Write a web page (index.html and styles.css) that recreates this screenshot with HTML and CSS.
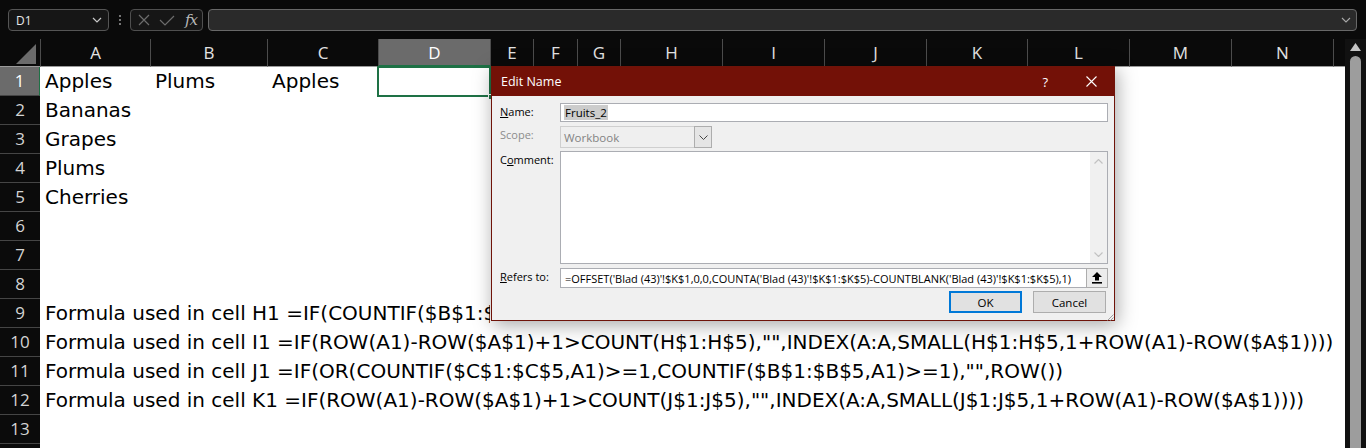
FILE: index.html
```html
<!DOCTYPE html>
<html lang="en">
<head>
  <meta charset="UTF-8" />
  <title>Edit Name</title>
  <link rel="stylesheet" href="styles.css">
</head>
<body>
  <div class="app">
    <div class="fbar">
      <div class="namebox">
        <span>D1</span>
        <svg class="nb-chev" width="10" height="6" viewBox="0 0 10 6"><path d="M1 1 L5 5 L9 1" fill="none" stroke="#c8c8c8" stroke-width="1.2"/></svg>
      </div>
      <div class="fdots">
        <svg width="4" height="12" viewBox="0 0 4 12"><circle cx="2" cy="2" r="1" fill="#9a9a9a"/><circle cx="2" cy="6" r="1" fill="#9a9a9a"/><circle cx="2" cy="10" r="1" fill="#9a9a9a"/></svg>
      </div>
      <div class="fbtns">
        <svg width="12" height="12" viewBox="0 0 12 12"><path d="M1 1 L11 11 M11 1 L1 11" stroke="#6c6c6c" stroke-width="1.2"/></svg>
        <svg width="16" height="11" viewBox="0 0 16 11"><path d="M1 5 L6 10 L15 1" fill="none" stroke="#6c6c6c" stroke-width="1.2"/></svg>
        <span class="fx">fx</span>
      </div>
      <div class="finput">
        <svg width="10" height="6" viewBox="0 0 10 6"><path d="M1 1 L5 5 L9 1" fill="none" stroke="#a8a8a8" stroke-width="1.1"/></svg>
      </div>
    </div>

    <div class="main">
      <div class="sheet">
        <div class="row head">
          <div class="corner"><svg width="20" height="20" viewBox="0 0 20 20"><path d="M20 0 L20 20 L0 20 Z" fill="#6b6b6b"/></svg></div>
          <div class="ch">A</div>
          <div class="ch">B</div>
          <div class="ch">C</div>
          <div class="ch sel">D</div>
          <div class="ch">E</div>
          <div class="ch">F</div>
          <div class="ch">G</div>
          <div class="ch">H</div>
          <div class="ch">I</div>
          <div class="ch">J</div>
          <div class="ch">K</div>
          <div class="ch">L</div>
          <div class="ch">M</div>
          <div class="ch">N</div>
          <div class="ch"></div>
        </div>
        <div class="row">
          <div class="rh sel">1</div>
          <div class="c">Apples</div>
          <div class="c">Plums</div>
          <div class="c">Apples</div>
          <div class="c cur"><span class="handle"></span></div>
        </div>
        <div class="row"><div class="rh">2</div><div class="c">Bananas</div></div>
        <div class="row"><div class="rh">3</div><div class="c">Grapes</div></div>
        <div class="row"><div class="rh">4</div><div class="c">Plums</div></div>
        <div class="row"><div class="rh">5</div><div class="c">Cherries</div></div>
        <div class="row"><div class="rh">6</div></div>
        <div class="row"><div class="rh">7</div></div>
        <div class="row"><div class="rh">8</div></div>
        <div class="row"><div class="rh">9</div><div class="c under">Formula used in cell H1 =IF(COUNTIF($B$1:$B$5,A1)&gt;=1,ROW(),"")</div></div>
        <div class="row"><div class="rh">10</div><div class="c">Formula used in cell I1 =IF(ROW(A1)-ROW($A$1)+1&gt;COUNT(H$1:H$5),"",INDEX(A:A,SMALL(H$1:H$5,1+ROW(A1)-ROW($A$1))))</div></div>
        <div class="row"><div class="rh">11</div><div class="c">Formula used in cell J1 =IF(OR(COUNTIF($C$1:$C$5,A1)&gt;=1,COUNTIF($B$1:$B$5,A1)&gt;=1),"",ROW())</div></div>
        <div class="row"><div class="rh">12</div><div class="c">Formula used in cell K1 =IF(ROW(A1)-ROW($A$1)+1&gt;COUNT(J$1:J$5),"",INDEX(A:A,SMALL(J$1:J$5,1+ROW(A1)-ROW($A$1))))</div></div>
        <div class="row"><div class="rh">13</div></div>
        <div class="row"><div class="rh"></div></div>
      </div>
      <div class="vscroll">
        <svg width="11" height="8" viewBox="0 0 11 8"><path d="M5.5 0 L11 8 L0 8 Z" fill="#c4c4c4"/></svg>
        <div class="thumb"></div>
      </div>
    </div>

    <div class="dialog">
      <div class="dlg-title">
        <span>Edit Name</span>
        <span class="dlg-help">?</span>
        <svg class="dlg-close" width="11" height="11" viewBox="0 0 11 11"><path d="M0.5 0.5 L10.5 10.5 M10.5 0.5 L0.5 10.5" stroke="#fff" stroke-width="1.1"/></svg>
      </div>
      <div class="dlg-body">
        <div class="frow r-name">
          <label><u>N</u>ame:</label>
          <div class="field"><span class="hl">Fruits_2</span></div>
        </div>
        <div class="frow r-scope">
          <label class="dis">Scope:</label>
          <div class="select">
            <span>Workbook</span>
            <div class="sel-btn"><svg width="9" height="5" viewBox="0 0 9 5"><path d="M0.5 0.5 L4.5 4.5 L8.5 0.5" fill="none" stroke="#444" stroke-width="1"/></svg></div>
          </div>
        </div>
        <div class="frow r-comment">
          <label>C<u>o</u>mment:</label>
          <div class="field area">
            <div class="area-scroll">
              <svg width="9" height="5" viewBox="0 0 9 5"><path d="M0.5 4.5 L4.5 0.5 L8.5 4.5" fill="none" stroke="#c2c2c2" stroke-width="1.2"/></svg>
              <svg width="9" height="5" viewBox="0 0 9 5"><path d="M0.5 0.5 L4.5 4.5 L8.5 0.5" fill="none" stroke="#c2c2c2" stroke-width="1.2"/></svg>
            </div>
          </div>
        </div>
        <div class="frow r-refers">
          <label><u>R</u>efers to:</label>
          <div class="field refers">
            <span>=OFFSET('Blad (43)'!$K$1,0,0,COUNTA('Blad (43)'!$K$1:$K$5)-COUNTBLANK('Blad (43)'!$K$1:$K$5),1)</span>
            <div class="collapse"><svg width="10" height="12" viewBox="0 0 10 12"><path d="M5 0 L10 5 L7 5 L7 8.5 L3 8.5 L3 5 L0 5 Z" fill="#000"/><rect x="0" y="10" width="10" height="1.6" fill="#000"/></svg></div>
          </div>
        </div>
        <div class="btns">
          <div class="btn ok">OK</div>
          <div class="btn">Cancel</div>
        </div>
        <svg class="grip" width="8" height="8" viewBox="0 0 8 8"><path d="M7.5 1.5 L1.5 7.5 M7.5 4.5 L4.5 7.5" stroke="#a0a0a0" stroke-width="1"/></svg>
      </div>
    </div>
  </div>
</body>
</html>
```

FILE: styles.css
```css
* {
  box-sizing: border-box;
}

body {
  margin: 0;
  background: #0a0a0a;
  font-family: 'Open Sans', sans-serif;
  overflow: hidden;
}

.app {
  position: relative;
  width: 1366px;
  height: 448px;
  overflow: hidden;
  background: #0a0a0a;
}

/* formula bar */
.fbar {
  height: 39px;
  display: flex;
  align-items: flex-start;
  padding: 9px 9px 0 8px;
}

.namebox {
  width: 101px;
  height: 22px;
  border: 1px solid #555;
  border-radius: 4px;
  background: #161616;
  display: flex;
  align-items: center;
  justify-content: space-between;
  padding: 0 6px 0 7px;
  color: #e8e8e8;
  font-size: 12px;
}

.fdots {
  width: 21px;
  height: 22px;
  display: flex;
  align-items: center;
  justify-content: center;
}

.fbtns {
  width: 73px;
  height: 22px;
  border: 1px solid #4f4f4f;
  border-radius: 4px;
  background: #161616;
  display: flex;
  align-items: center;
  padding: 0 5px 0 7px;
  gap: 9px;
}

.fx {
  font-family: 'DejaVu Serif', serif;
  font-style: italic;
  font-size: 15px;
  color: #b8b8b8;
  margin-left: 1px;
  letter-spacing: -1px;
}

.finput {
  flex: 1;
  margin-left: 5px;
  height: 22px;
  border: 1px solid #686868;
  border-radius: 4px;
  background: #2a2a2a;
  display: flex;
  align-items: center;
  justify-content: flex-end;
  padding-right: 5px;
}

/* grid */
.main {
  display: flex;
}

.sheet {
  width: 1345px;
}

.row {
  display: grid;
  grid-template-columns: 40px 110px 117px 111px 112px 43px 44px 43px 102px 102px 102px 101px 102px 102px 102px 12px;
  height: 29px;
  background: #fff;
}

.row.head {
  height: 28px;
  background: #0a0a0a;
}

.corner {
  border-bottom: 1px solid #9b9b9b;
  display: flex;
  align-items: flex-start;
  justify-content: flex-end;
  padding: 5px 4px 0 0;
}

.ch {
  border-left: 1px solid #4c4c4c;
  border-bottom: 1px solid #9b9b9b;
  display: flex;
  align-items: center;
  justify-content: center;
  color: #e2e2e2;
  font-size: 17px;
}

.ch.sel {
  background: #6b6b6b;
  color: #fff;
  border-bottom: 2px solid #1e7145;
}

.rh {
  grid-column: 1;
  background: #0b0b0b;
  border-bottom: 1px solid #454545;
  color: #d4d4d4;
  font-size: 17px;
  line-height: 28px;
  text-align: center;
}

.rh.sel {
  background: #6b6b6b;
  color: #fff;
  border-right: 1px solid #1e7145;
}

.c {
  padding-left: 5px;
  font-family: 'DejaVu Sans', sans-serif;
  font-size: 20px;
  line-height: 29px;
  color: #000;
  white-space: nowrap;
}

/* part of row 9 lies under the dialog */
.c.under {
  grid-column: 2 / span 4;
  overflow: hidden;
}

.c.cur {
  position: relative;
  outline: 2px solid #1e7145;
  outline-offset: -1px;
}

.handle {
  position: absolute;
  right: -4px;
  bottom: -4px;
  width: 6px;
  height: 6px;
  background: #1e7145;
  border: 1px solid #fff;
}

.vscroll {
  width: 21px;
  height: 409px;
  background: #111;
  display: flex;
  flex-direction: column;
  align-items: center;
  padding-top: 4px;
}

.thumb {
  width: 11px;
  flex: 1;
  margin-top: 5px;
  background: #9d9d9d;
  border-radius: 6px 6px 0 0;
}

/* dialog */
.dialog {
  position: absolute;
  left: 491px;
  top: 66px;
  width: 624px;
  height: 255px;
  border: 1px solid #6f1309;
  background: #f0f0f0;
  box-shadow: 2px 4px 18px rgba(0, 0, 0, 0.35);
}

.dlg-title {
  height: 29px;
  background: #731107;
  color: #fff;
  font-size: 12.5px;
  display: flex;
  align-items: center;
  padding-left: 9px;
}

.dlg-help {
  margin-left: auto;
  font-size: 13px;
  margin-right: 38px;
}

.dlg-close {
  margin-right: 17px;
}

.dlg-body {
  position: relative;
  padding: 7px 6px 0 8px;
  font-size: 11px;
  color: #000;
}

.frow {
  display: flex;
  align-items: flex-start;
}

.frow label {
  width: 60px;
  padding-top: 1px;
}

.frow label.dis {
  color: #8c8c8c;
}

.field {
  width: 548px;
  height: 19px;
  border: 1px solid #abadb3;
  background: #fff;
  display: flex;
  align-items: center;
  padding-left: 3px;
}

.hl {
  background: #cccccc;
  padding: 0 1px;
  line-height: 15px;
  font-size: 11.5px;
}

.r-scope {
  margin-top: 4px;
}

.select {
  width: 152px;
  height: 22px;
  border: 1px solid #cfcfcf;
  background: #efefef;
  color: #838383;
  font-size: 11.5px;
  display: flex;
  align-items: center;
  justify-content: space-between;
  padding-left: 3px;
}

.sel-btn {
  width: 18px;
  height: 22px;
  margin: -1px -1px -1px 0;
  border: 1px solid #adadad;
  background: #e5e5e5;
  display: flex;
  align-items: center;
  justify-content: center;
}

.r-comment {
  margin-top: 3px;
}

.field.area {
  height: 113px;
  align-items: stretch;
  justify-content: flex-end;
  padding: 0;
}

.area-scroll {
  width: 17px;
  background: #f0f0f0;
  display: flex;
  flex-direction: column;
  align-items: center;
  justify-content: space-between;
  padding: 7px 0 6px;
}

.r-refers {
  margin-top: 4px;
}

.field.refers {
  height: 20px;
  justify-content: space-between;
  padding-left: 4px;
  padding-right: 0;
}

.collapse {
  width: 22px;
  height: 20px;
  margin: -1px -1px -1px 0;
  border: 1px solid #adadad;
  background: #ececec;
  display: flex;
  align-items: center;
  justify-content: center;
}

.btns {
  display: flex;
  justify-content: flex-end;
  gap: 11px;
  margin-top: 3px;
  padding-right: 2px;
}

.btn {
  width: 73px;
  height: 22px;
  border: 1px solid #adadad;
  background: #e1e1e1;
  font-size: 11.5px;
  display: flex;
  align-items: center;
  justify-content: center;
}

.btn.ok {
  border: 2px solid #0078d7;
}

.grip {
  position: absolute;
  right: 0;
  bottom: -8px;
}
```
